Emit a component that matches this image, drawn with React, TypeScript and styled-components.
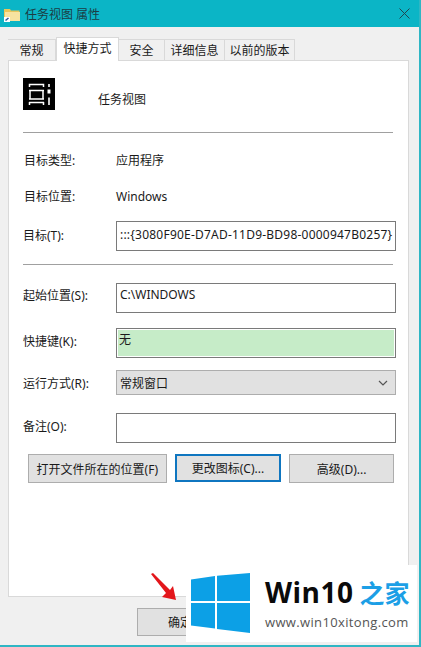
import React from 'react';
import styled, { createGlobalStyle } from 'styled-components';

const GlobalStyle = createGlobalStyle`
  html, body {
    margin: 0;
    padding: 0;
    background: #f0f0f0;
  }
  * {
    box-sizing: border-box;
  }
`;

const Dialog = styled.div`
  position: relative;
  width: 421px;
  height: 647px;
  overflow: hidden;
  display: flex;
  flex-direction: column;
  background: #f0f0f0;
  border-right: 2px solid #2fb6c4;
  border-bottom: 2px solid #2fb6c4;
  font-family: "Noto Sans", "Noto Sans CJK SC", sans-serif;
  font-size: 12px;
  color: #1a1a1a;
`;

const TitleBar = styled.div`
  height: 27px;
  margin-right: -2px;
  flex: none;
  display: flex;
  align-items: center;
  padding: 0 11px 0 4px;
  background: #0bb5c6;
  color: #1c3c44;
`;

const TitleText = styled.span`
  margin-left: 5px;
  flex: 1;
  font-size: 12px;
  white-space: pre;
`;

const TabBar = styled.div`
  display: flex;
  align-items: flex-end;
  height: 24px;
  margin: 9px 0 0 8px;
  flex: none;
`;

const Tab = styled.div<{ $width: number; $active?: boolean }>`
  width: ${(p) => p.$width}px;
  height: ${(p) => (p.$active ? 24 : 21)}px;
  display: flex;
  align-items: center;
  justify-content: center;
  padding-bottom: ${(p) => (p.$active ? 3 : 0)}px;
  background: ${(p) => (p.$active ? '#fff' : '#f0f0f0')};
  border: 1px solid #d9d9d9;
  border-bottom: none;
  border-left: ${(p) => (p.$active ? '1px solid #d9d9d9' : 'none')};
  margin-bottom: ${(p) => (p.$active ? -1 : 0)}px;
  position: relative;
  z-index: ${(p) => (p.$active ? 1 : 0)};
`;

const Panel = styled.div`
  width: 401px;
  height: 537px;
  margin-left: 8px;
  flex: none;
  padding: 17px 14px 0;
  background: #fff;
  border: 1px solid #d9d9d9;
`;

const ShortcutHead = styled.div`
  display: flex;
  align-items: center;
  height: 32px;
`;

const ShortcutName = styled.span`
  margin: 9px 0 0 43px;
`;

const Rule = styled.div<{ $top: number; $bottom: number }>`
  height: 1px;
  width: 370px;
  margin: ${(p) => p.$top}px 0 ${(p) => p.$bottom}px;
  background: #a0a0a0;
`;

const InfoRow = styled.div<{ $bottom?: number }>`
  display: grid;
  grid-template-columns: 92px 1fr;
  align-items: center;
  height: 18px;
  margin-bottom: ${(p) => p.$bottom ?? 0}px;
  padding-left: 1px;
`;

const FieldRow = styled.div<{ $bottom?: number; $height?: number }>`
  display: grid;
  grid-template-columns: 93px 280px;
  align-items: center;
  height: ${(p) => p.$height ?? 30}px;
  margin-bottom: ${(p) => p.$bottom ?? 0}px;
`;

const Label = styled.span<{ $lift?: number }>`
  padding-bottom: ${(p) => p.$lift ?? 0}px;
`;

const Field = styled.div<{ $hotkey?: boolean }>`
  height: 100%;
  padding: ${(p) => (p.$hotkey ? '1px 0 0 2px' : '1px 0 0 3px')};
  line-height: 19px;
  white-space: nowrap;
  background: ${(p) => (p.$hotkey ? '#c6ecc8' : '#fff')};
  border: 1px solid #7a7a7a;
  box-shadow: ${(p) => (p.$hotkey ? 'inset 0 0 0 1px #fff' : 'none')};
`;

const TargetValue = styled(Field)`
  padding-top: 3px;
  font-size: 12px;
  letter-spacing: 0.22px;
`;

const Select = styled.div`
  height: 100%;
  display: flex;
  align-items: center;
  justify-content: space-between;
  padding: 0 7px 0 3px;
  background: #e1e1e1;
  border: 1px solid #adadad;
`;

const ButtonRow = styled.div`
  display: flex;
  align-items: flex-start;
  gap: 8px;
  margin: 11px 0 0 5px;
`;

const Button = styled.div<{ $width: number; $focused?: boolean }>`
  width: ${(p) => p.$width}px;
  height: ${(p) => (p.$focused ? 28 : 29)}px;
  display: flex;
  align-items: center;
  justify-content: center;
  background: #e1e1e1;
  border: ${(p) => (p.$focused ? '2px solid #0f76c0' : '1px solid #adadad')};
`;

const Footer = styled.div`
  flex: 1;
  padding: 11px 0 0 137px;
`;

const OkButton = styled.div`
  width: 86px;
  height: 28px;
  display: flex;
  align-items: center;
  justify-content: center;
  background: #e1e1e1;
  border: 1px solid #adadad;
`;

const Arrow = styled.svg`
  position: absolute;
  left: 148px;
  top: 570px;
`;

const Watermark = styled.div`
  position: absolute;
  left: 186px;
  top: 565px;
  width: 231px;
  height: 77px;
  display: flex;
  align-items: center;
  padding: 0 0 2px 5px;
  background: #fff;
`;

const WatermarkText = styled.div`
  display: flex;
  flex-direction: column;
  margin-left: 14px;
`;

const BrandLine = styled.div`
  display: flex;
  align-items: center;
  gap: 6px;
  height: 33px;
`;

const BrandName = styled.span`
  font-family: "Open Sans", sans-serif;
  font-weight: 700;
  font-size: 28px;
  letter-spacing: 0.5px;
  color: #0a0a0a;
`;

const BrandZh = styled.span`
  font-family: "Noto Sans CJK SC", sans-serif;
  font-weight: 700;
  font-size: 25px;
  line-height: 28px;
  color: #1c9fe6;
`;

const BrandUrl = styled.span`
  margin-top: 6px;
  font-family: "Open Sans", sans-serif;
  font-size: 13px;
  line-height: 16px;
  letter-spacing: 0.35px;
  color: #555;
`;

const tabs = [
  { label: '常规', width: 48 },
  { label: '快捷方式', width: 63, active: true },
  { label: '安全', width: 46 },
  { label: '详细信息', width: 60 },
  { label: '以前的版本', width: 70 },
];

const FolderIcon = () => (
  <svg width="16" height="16" viewBox="0 0 16 16">
    <path d="M0 3h6l1 1.500h8.500V15H0z" fill="#e8c65c" />
    <path d="M1 6h15v9H1z" fill="#f7e3a0" />
    <path d="M0 11h6v5H0z" fill="#fff" />
    <path d="M1.500 14.500 4.500 12" stroke="#2a5a96" strokeWidth="1.600" />
  </svg>
);

const TaskViewIcon = () => (
  <svg width="32" height="32" viewBox="0 0 32 32">
    <rect width="32" height="32" fill="#000" />
    <g stroke="#fff" strokeWidth="1.500" fill="none">
      <path d="M6.500 9V6.500h14V9" />
      <path d="M6 12.500h15M6 21h15M7 12v9M20 12v9" />
      <path d="M6 24.500h15M6.500 24v3M20.500 24v3" />
      <path d="M26 6v3M26 19.500v7.500" strokeWidth="1.600" />
      <path d="M26 11.500v4" strokeWidth="3" />
    </g>
  </svg>
);

const CloseIcon = () => (
  <svg width="11" height="11" viewBox="0 0 11 11">
    <path d="M.5.5l10 10M10.500.5l-10 10" stroke="#1f4650" strokeWidth="1" fill="none" />
  </svg>
);

const Chevron = () => (
  <svg width="10" height="6" viewBox="0 0 10 6">
    <path d="M1 1l4 4 4-4" stroke="#555" strokeWidth="1.200" fill="none" />
  </svg>
);

const WinLogo = () => (
  <svg width="60" height="60" viewBox="0 0 60 60">
    <path d="M0 6.500 24 3v25H0zM26 2.800 59 0v28H26zM0 30h24v25.500L0 52.500zM26 30h33v30l-33-4z" fill="#0ca0e6" />
  </svg>
);

const App = () => (
  <Dialog>
    <GlobalStyle />
    <TitleBar>
      <FolderIcon />
      <TitleText>任务视图 属性</TitleText>
      <CloseIcon />
    </TitleBar>
    <TabBar>
      {tabs.map((tab) => (
        <Tab key={tab.label} $width={tab.width} $active={tab.active}>
          {tab.label}
        </Tab>
      ))}
    </TabBar>
    <Panel>
      <ShortcutHead>
        <TaskViewIcon />
        <ShortcutName>任务视图</ShortcutName>
      </ShortcutHead>
      <Rule $top={22} $bottom={18} />
      <InfoRow $bottom={18}>
        <span>目标类型:</span>
        <span>应用程序</span>
      </InfoRow>
      <InfoRow $bottom={16}>
        <span>目标位置:</span>
        <span>Windows</span>
      </InfoRow>
      <FieldRow>
        <Label $lift={2}>目标(T):</Label>
        <TargetValue>:::{'{'}3080F90E-D7AD-11D9-BD98-0000947B0257{'}'}</TargetValue>
      </FieldRow>
      <Rule $top={13} $bottom={18} />
      <FieldRow $bottom={15}>
        <Label $lift={6}>起始位置(S):</Label>
        <Field>C:\WINDOWS</Field>
      </FieldRow>
      <FieldRow $bottom={12}>
        <Label $lift={4}>快捷键(K):</Label>
        <Field $hotkey>无</Field>
      </FieldRow>
      <FieldRow $bottom={18} $height={25}>
        <Label>运行方式(R):</Label>
        <Select>
          <span>常规窗口</span>
          <Chevron />
        </Select>
      </FieldRow>
      <FieldRow>
        <Label $lift={4}>备注(O):</Label>
        <Field />
      </FieldRow>
      <ButtonRow>
        <Button $width={139}>打开文件所在的位置(F)</Button>
        <Button $width={107} $focused>更改图标(C)...</Button>
        <Button $width={105}>高级(D)...</Button>
      </ButtonRow>
    </Panel>
    <Footer>
      <OkButton>确定</OkButton>
    </Footer>
    <Arrow width="34" height="36" viewBox="0 0 34 36">
      <path d="M3 4 5 3 22 20 25 16 28 30 14 27 18 23z" fill="#e3161b" />
    </Arrow>
    <Watermark>
      <WinLogo />
      <WatermarkText>
        <BrandLine>
          <BrandName>Win10</BrandName>
          <BrandZh>之家</BrandZh>
        </BrandLine>
        <BrandUrl>www.win10xitong.com</BrandUrl>
      </WatermarkText>
    </Watermark>
  </Dialog>
);

export default App;
